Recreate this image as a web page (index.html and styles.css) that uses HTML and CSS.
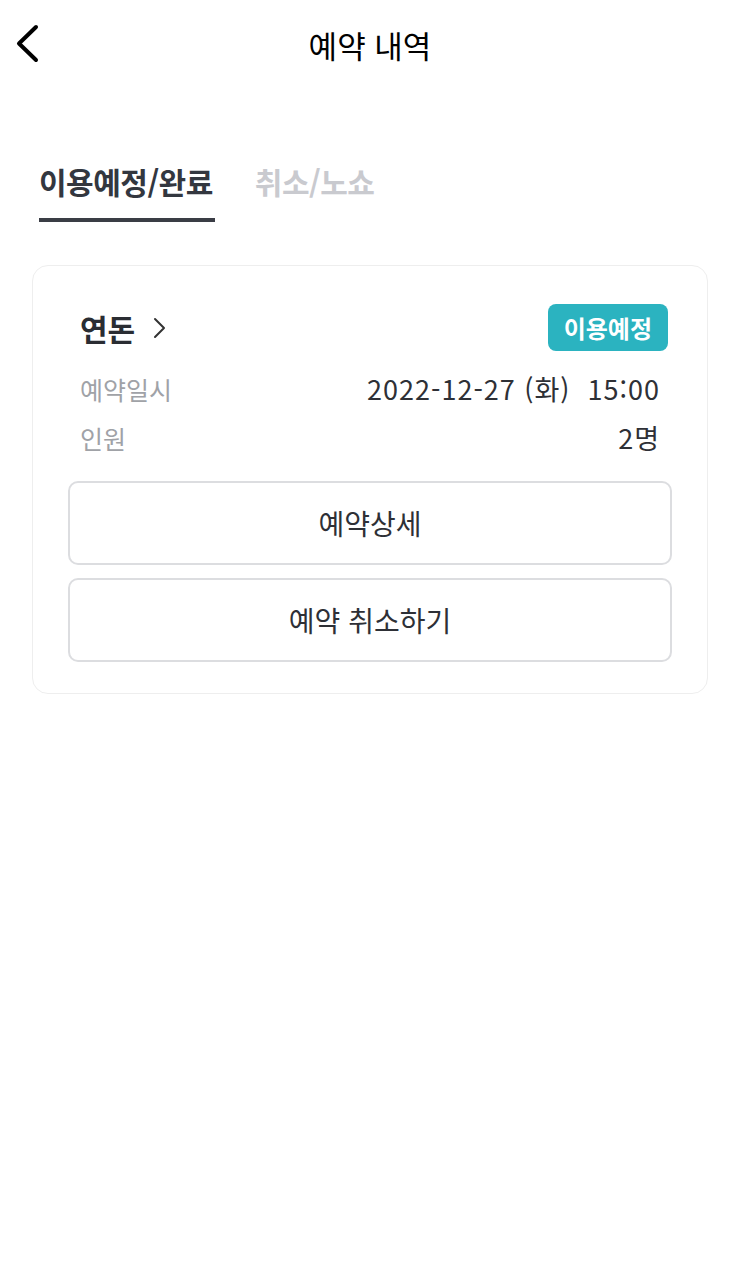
FILE: index.html
```
<!DOCTYPE html>
<html lang="ko">
<head>
  <meta charset="UTF-8">
  <title>예약 내역</title>
  <link rel="stylesheet" href="styles.css">
</head>
<body>
  <header class="topbar">
    <button class="back" aria-label="뒤로">
      <svg width="26" height="40" viewBox="0 0 26 40">
        <polyline points="22,3 5,19.5 22,36" fill="none" stroke="#000" stroke-width="4" stroke-linecap="round" stroke-linejoin="round"/>
      </svg>
    </button>
    <h1>예약 내역</h1>
  </header>

  <nav class="tabs">
    <div class="tab active">이용예정/완료</div>
    <div class="tab">취소/노쇼</div>
  </nav>

  <section class="card">
    <div class="card-head">
      <div class="shop">
        연돈
        <svg width="14" height="22" viewBox="0 0 14 22">
          <polyline points="3,2 12,11 3,20" fill="none" stroke="#333" stroke-width="2" stroke-linecap="round" stroke-linejoin="round"/>
        </svg>
      </div>
      <span class="badge">이용예정</span>
    </div>
    <div class="row first">
      <span class="label">예약일시</span>
      <span class="value">2022-12-27 (화)&nbsp;&nbsp;15:00</span>
    </div>
    <div class="row">
      <span class="label">인원</span>
      <span class="value">2명</span>
    </div>
    <div class="actions">
      <button class="btn">예약상세</button>
      <button class="btn">예약 취소하기</button>
    </div>
  </section>
</body>
</html>
```

FILE: styles.css
```
body {
  margin: 0;
  background: #fff;
  font-family: "Noto Sans CJK KR", "Noto Sans", sans-serif;
  color: #222;
}
.topbar {
  height: 88px;
  display: flex;
  align-items: center;
  justify-content: center;
  position: relative;
}
.topbar h1 {
  margin: 0;
  font-size: 31px;
  font-weight: 400;
  color: #000;
}
.back {
  position: absolute;
  left: 14px;
  top: 24px;
  padding: 0;
  border: 0;
  background: none;
}
.tabs {
  display: flex;
  gap: 40px;
  padding: 0 0 0 39px;
  margin-top: 68px;
}
.tab {
  font-size: 30px;
  font-weight: 700;
  color: #c9cacf;
  height: 66px;
  line-height: 50px;
  letter-spacing: -0.5px;
}
.tab.active {
  color: #33373f;
  border-bottom: 4px solid #3a3d45;
  height: 62px;
  padding-right: 2px;
}
.card {
  margin: 43px 32px 0;
  border: 1px solid #eeeeee;
  border-radius: 16px;
  padding: 38px 35px 31px;
}
.card-head {
  display: flex;
  justify-content: space-between;
  align-items: center;
  padding: 0 4px 0 12px;
}
.shop {
  display: flex;
  align-items: center;
  gap: 17px;
  font-size: 30px;
  font-weight: 700;
  color: #2a2d33;
}
.badge {
  background: #2bb3c0;
  color: #fff;
  font-size: 24px;
  font-weight: 700;
  border-radius: 8px;
  height: 47px;
  line-height: 47px;
  padding: 0 16px;
}
.row {
  display: flex;
  justify-content: space-between;
  align-items: center;
  height: 49px;
  padding: 0 12px;
  font-size: 25px;
}
.row.first {
  margin-top: 13px;
}
.label {
  color: #a0a2a7;
}
.value {
  color: #2e3036;
  font-size: 27px;
  letter-spacing: 1px;
}
.actions {
  display: flex;
  flex-direction: column;
  gap: 13px;
  margin-top: 19px;
}
.btn {
  height: 84px;
  border: 2px solid #dcdde0;
  border-radius: 10px;
  background: #fff;
  font-family: inherit;
  font-size: 28px;
  color: #2e3036;
}
```
